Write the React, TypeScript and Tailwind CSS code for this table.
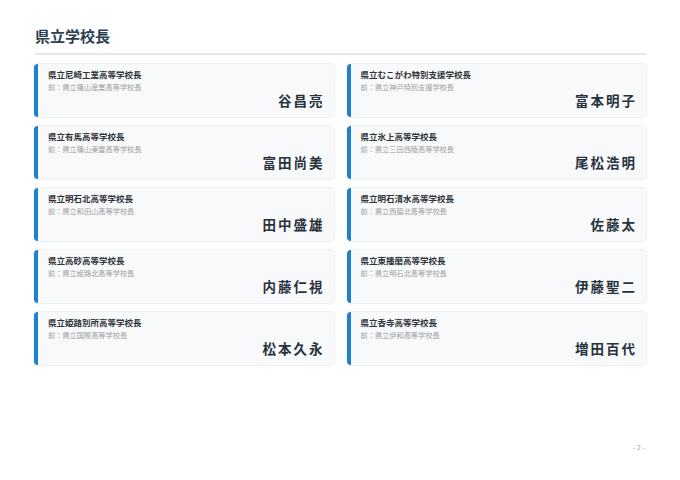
import React from "react";

const items = [
  { school: "県立尼崎工業高等学校長", prev: "前：県立篠山産業高等学校長", name: "谷昌亮" },
  { school: "県立むこがわ特別支援学校長", prev: "前：県立神戸特別支援学校長", name: "富本明子" },
  { school: "県立有馬高等学校長", prev: "前：県立篠山東雲高等学校長", name: "富田尚美" },
  { school: "県立氷上高等学校長", prev: "前：県立三田西陵高等学校長", name: "尾松浩明" },
  { school: "県立明石北高等学校長", prev: "前：県立和田山高等学校長", name: "田中盛雄" },
  { school: "県立明石清水高等学校長", prev: "前：県立西脇北高等学校長", name: "佐藤太" },
  { school: "県立高砂高等学校長", prev: "前：県立姫路北高等学校長", name: "内藤仁視" },
  { school: "県立東播磨高等学校長", prev: "前：県立明石北高等学校長", name: "伊藤聖二" },
  { school: "県立姫路別所高等学校長", prev: "前：県立国際高等学校長", name: "松本久永" },
  { school: "県立香寺高等学校長", prev: "前：県立伊和高等学校長", name: "増田百代" },
];

export default function App() {
  return (
    <div
      className="w-[680px] h-[480px] bg-white flex flex-col px-[34px]"
      style={{ fontFamily: '"Noto Sans CJK JP", "Noto Sans", sans-serif' }}
    >
      <div className="pt-[25px] pl-[1px] text-[15px] leading-[22px] font-bold text-[#2c3e50]">県立学校長</div>
      <div className="mt-[6px] ml-[1px] h-[2px] bg-[#e6e8eb]" />
      <div className="mt-[9px] grid grid-cols-2 gap-x-[13px] gap-y-[9px]">
        {items.map((it) => (
          <div
            key={it.school}
            className="h-[53px] bg-[#f8f9fa] rounded-[4px] border-l-[4px] border-[#1f7fd1] shadow-[0_0_0_1px_#eef0f2,0_1px_2px_rgba(0,0,0,0.05)] pl-[10px] pr-[9px] pt-[4px] flex flex-col"
          >
            <div className="text-[8.5px] leading-[12px] font-bold text-[#2d3338]">{it.school}</div>
            <div className="mt-[2px] text-[7.2px] leading-[10px] text-[#9a9fa4]">{it.prev}</div>
            <div className="text-right text-[13.5px] leading-[16px] font-bold tracking-[2px] text-[#27323d]">
              {it.name}
            </div>
          </div>
        ))}
      </div>
      <div className="mt-auto pb-[28px] pr-[1px] text-right text-[7px] leading-[10px] text-[#a0a4a8]">- 2 -</div>
    </div>
  );
}
